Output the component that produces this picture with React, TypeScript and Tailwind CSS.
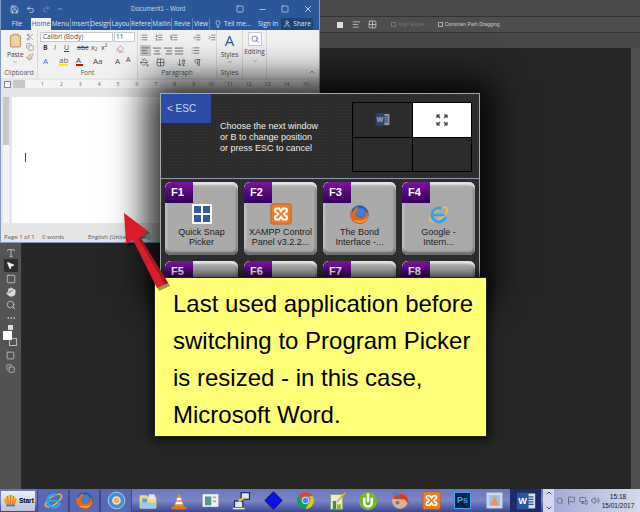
import {
  AlignCenter,
  AlignJustify,
  AlignLeft,
  AlignRight,
  ArrowDownAZ,
  ChevronUp,
  ChevronDown,
  Clipboard,
  Copy,
  Eraser,
  Flag,
  Grid2x2,
  Hand,
  IndentDecrease,
  IndentIncrease,
  Lightbulb,
  List,
  ListOrdered,
  ListTree,
  Minus,
  MonitorSmartphone,
  MoreHorizontal,
  MousePointer2,
  Paintbrush,
  PaintBucket,
  Pilcrow,
  Redo2,
  Save,
  Scissors,
  Search,
  Square,
  Type,
  Undo2,
  User,
  Volume2,
  X,
} from "lucide-react";
import type { ReactNode } from "react";

const rulerMarks = ["1", "2", "3", "4", "5", "6", "7", "8", "9", "10", "11", "12", "13", "14", "15"];

function Firefox({ size = 20 }: { size?: number }) {
  return (
    <svg width={size} height={size} viewBox="0 0 24 24">
      <circle cx="12" cy="12" r="10.5" fill="#2a5aa8" />
      <circle cx="13" cy="10" r="5.5" fill="#3f7fd0" />
      <path d="M12 22.5C5 22.5 1.5 17 1.5 12c0-2 .5-4 1.5-5.5.2 1.5.8 2.4 1.5 3C5 6 8 3 11 3c-1 1.5-1 3 0 4-3 1-4 4-2.5 6.5 2 3 6.5 3 9 .5 1.500-1.500 2-3.500 1.500-6 1.500 1 2.500 2.500 3 4.500-.2 6-5 10.500-10 10.500z" fill="#e8651a" />
      <path d="M5 18c3 3.500 9 4.500 13 1.500 2-1.500 3.500-3.500 4-6-1.500 3-4 5-7.500 5.500-3.500.5-7-.2-9.500-1z" fill="#f7a823" />
    </svg>
  );
}

function IeIcon({ size = 20 }: { size?: number }) {
  return (
    <svg width={size} height={size} viewBox="0 0 24 24">
      <ellipse cx="12" cy="12" rx="12" ry="5" transform="rotate(-35 12 12)" fill="none" stroke="#f5c22e" strokeWidth="1.8" />
      <circle cx="12.500" cy="12.500" r="8" fill="none" stroke="#2fa4e8" strokeWidth="3.400" strokeDasharray="38 12" transform="rotate(18 12.500 12.500)" />
      <rect x="6" y="11.200" width="13" height="2.600" fill="#2fa4e8" />
    </svg>
  );
}

function Xampp({ size = 20 }: { size?: number }) {
  return (
    <svg width={size} height={size} viewBox="0 0 24 24">
      <rect x="1" y="1" width="22" height="22" rx="2" fill="#ef7b24" stroke="#b9601f" />
      <path d="M7 6h3l2 3 2-3h3c2 0 2 4 0 4l-2 2 2 2c2 0 2 4 0 4h-3l-2-3-2 3H7c-2 0-2-4 0-4l2-2-2-2c-2 0-2-4 0-4z" fill="none" stroke="#fff" strokeWidth="2.200" />
    </svg>
  );
}

function SnapGrid() {
  return (
    <div className="grid h-[20px] w-[20px] grid-cols-2 gap-[2px] bg-white p-[2px]">
      <div className="bg-[#2f5aa6]" />
      <div className="bg-[#2f5aa6]" />
      <div className="bg-[#2f5aa6]" />
      <div className="bg-[#2f5aa6]" />
    </div>
  );
}

function WordIcon({ size = 20 }: { size?: number }) {
  return (
    <svg width={size} height={size} viewBox="0 0 24 24">
      <rect x="9" y="3" width="14" height="18" fill="#d9dfe9" />
      <path d="M13 7h8M13 10h8M13 13h8M13 16h8" stroke="#2b579a" strokeWidth="1.500" />
      <rect x="1" y="2" width="14" height="20" fill="#2b579a" />
      <text x="8" y="16" textAnchor="middle" fontSize="11" fontWeight="700" fill="#fff" fontFamily="'Liberation Sans', sans-serif">W</text>
    </svg>
  );
}

function Chrome({ size = 20 }: { size?: number }) {
  return (
    <svg width={size} height={size} viewBox="0 0 24 24">
      <path d="M12 1.500a10.500 10.500 0 0 1 9.100 5.250H12a5.250 5.250 0 0 0-4.900 3.300L3.500 5.600A10.500 10.500 0 0 1 12 1.500z" fill="#db4437" />
      <path d="M21.100 6.750A10.500 10.500 0 0 1 12 22.500l4.500-7.900a5.250 5.250 0 0 0 0-7.850z" fill="#f4c20d" />
      <path d="M12 22.500A10.500 10.500 0 0 1 3.500 5.600l4.600 8a5.250 5.250 0 0 0 8.400 1z" fill="#0f9d58" />
      <circle cx="12" cy="12" r="4.200" fill="#4285f4" stroke="#fff" />
    </svg>
  );
}

function TaskIcon({ children, boxed }: { children: ReactNode; boxed?: boolean }) {
  return (
    <div className={boxed ? "flex h-[23px] w-[31.500px] items-center justify-center rounded-[2px] border-x border-[#3e488c] bg-[#5a68b4]" : "flex h-[23px] w-[31.500px] items-center justify-center"}>
      {children}
    </div>
  );
}

function Taskbar() {
  return (
    <div className="flex h-[23px] w-full shrink-0 items-center bg-gradient-to-b from-[#6a76ba] via-[#7a86c6] to-[#3e4890]">
      <div className="mx-[1px] flex h-[20px] w-[35px] items-center bg-gradient-to-b from-[#eeeef4] to-[#bcc0da] pl-[1px]">
        <svg width="17" height="15" viewBox="0 0 24 24">
          <path d="M12 3C6 3 2 8 2 13c0 3 2 6 5 7h10c3-1 5-4 5-7 0-5-4-10-10-10z" fill="#f2c12e" />
          <path d="M12 3v17M7 5l2 15M17 5l-2 15M3 10l5 10M21 10l-5 10" stroke="#e0662a" strokeWidth="1.500" />
          <path d="M5 20h14" stroke="#2f8bd0" strokeWidth="3" />
        </svg>
        <span className="text-[6.500px] font-bold text-black">Start</span>
      </div>
      <div className="flex items-center pl-[1px]">
        <TaskIcon boxed><IeIcon size={19} /></TaskIcon>
        <TaskIcon boxed><Firefox size={19} /></TaskIcon>
        <TaskIcon boxed>
          <svg width="19" height="19" viewBox="0 0 24 24">
            <circle cx="12" cy="12" r="10.500" fill="#3f8fd8" stroke="#bfe2f8" />
            <circle cx="12" cy="12" r="4.500" fill="#f2b04a" stroke="#f8e2b0" strokeWidth="2" />
          </svg>
        </TaskIcon>
        <TaskIcon>
          <svg width="20" height="20" viewBox="0 0 24 24">
            <path d="M2 5h8l2 2h10v14H2z" fill="#f2d98a" />
            <rect x="5" y="9" width="6" height="5" fill="#5aa4de" />
            <rect x="13" y="4" width="7" height="6" fill="#e9e9e9" />
            <path d="M2 14h20l-2 7H4z" fill="#9cc8ee" />
          </svg>
        </TaskIcon>
        <TaskIcon>
          <svg width="20" height="20" viewBox="0 0 24 24">
            <path d="M12 2l6 17H6z" fill="#f28a1a" />
            <path d="M10 8h4l1 3H9zM8.500 13h7l1 3h-9z" fill="#f4f4f4" />
            <rect x="3" y="19" width="18" height="3" fill="#e87512" />
          </svg>
        </TaskIcon>
        <TaskIcon>
          <svg width="19" height="19" viewBox="0 0 24 24">
            <rect x="2" y="4" width="20" height="16" fill="#f1f1f1" />
            <rect x="5" y="7" width="8" height="11" fill="#4a9a94" />
            <rect x="15" y="7" width="4" height="2" fill="#9aa" />
            <rect x="15" y="12" width="4" height="2" fill="#9aa" />
          </svg>
        </TaskIcon>
        <TaskIcon>
          <svg width="20" height="20" viewBox="0 0 24 24">
            <rect x="11" y="2" width="10" height="8" fill="#dfe6f4" stroke="#1b2a6a" strokeWidth="1.500" />
            <rect x="3" y="12" width="10" height="8" fill="#dfe6f4" stroke="#1b2a6a" strokeWidth="1.500" />
            <path d="M8 12l7-4" stroke="#f2d21e" strokeWidth="2.500" />
            <rect x="1" y="20" width="14" height="2" fill="#e9e9e9" />
          </svg>
        </TaskIcon>
        <TaskIcon>
          <svg width="19" height="19" viewBox="0 0 24 24">
            <path d="M12 1l11 11-11 11L1 12z" fill="#0a14e0" stroke="#050a50" />
          </svg>
        </TaskIcon>
        <TaskIcon><Chrome size={19} /></TaskIcon>
        <TaskIcon>
          <svg width="20" height="20" viewBox="0 0 24 24">
            <path d="M4 4h15v18H4z" fill="#e9edd8" stroke="#7d8a5a" />
            <path d="M7 12h4v10H7z" fill="#3e8f3a" />
            <path d="M12 16h5v6h-5z" fill="#8ebb4a" />
            <path d="M22 2L12 13" stroke="#d8b040" strokeWidth="2" />
          </svg>
        </TaskIcon>
        <TaskIcon>
          <svg width="20" height="20" viewBox="0 0 24 24">
            <circle cx="12" cy="12" r="11" fill="#76b82a" />
            <path d="M7.500 8v6a4.500 4.500 0 0 0 9 0V8" fill="none" stroke="#fff" strokeWidth="3" />
            <path d="M12 3v10" stroke="#fff" strokeWidth="3" />
          </svg>
        </TaskIcon>
        <TaskIcon>
          <svg width="20" height="20" viewBox="0 0 24 24">
            <circle cx="12" cy="12" r="9.500" fill="#e0b088" />
            <path d="M3 9c3-7 13-9 18-1l2 8-6-6H8z" fill="#c9452a" />
            <circle cx="9" cy="14" r="2.200" fill="#3f7fc8" />
            <path d="M5 3l6 3" stroke="#3f7fc8" strokeWidth="2" />
          </svg>
        </TaskIcon>
        <TaskIcon><Xampp size={19} /></TaskIcon>
        <TaskIcon>
          <div className="flex h-[17px] w-[17px] items-center justify-center border border-[#31a8ff] bg-[#001e36] text-[9px] leading-none font-bold text-[#31a8ff]">Ps</div>
        </TaskIcon>
        <TaskIcon>
          <svg width="19" height="19" viewBox="0 0 24 24">
            <rect x="2" y="2" width="20" height="20" fill="#cfd8ea" />
            <rect x="5" y="5" width="14" height="14" fill="#9fc0e6" />
            <path d="M12 6l5 12H7z" fill="#f0905a" />
          </svg>
        </TaskIcon>
        <div className="flex h-[23px] w-[31.500px] items-center justify-center bg-[#1e2a6a]">
          <WordIcon size={20} />
        </div>
      </div>
      <div className="ml-[2px] flex h-[23px] w-[11px] flex-col items-center justify-between bg-[#d4d8ea] text-[#40487a]">
        <ChevronUp size={8} strokeWidth={3} />
        <ChevronDown size={8} strokeWidth={3} />
      </div>
      <div className="flex h-[23px] flex-1 items-center bg-gradient-to-r from-[#a4acd6] to-[#d5d9ec] pl-[2px] text-[#5a5a62]">
        <div className="flex items-center gap-[3px]">
          <Search size={8} />
          <Flag size={9} />
          <MonitorSmartphone size={9} />
          <Volume2 size={9} />
        </div>
        <div className="ml-auto w-[40px] pr-[4px] text-center text-[6.500px] leading-[9px] text-[#111]">
          <div>15:18</div>
          <div>15/01/2017</div>
        </div>
      </div>
    </div>
  );
}

function ToolSlot({ children, active }: { children: ReactNode; active?: boolean }) {
  return (
    <div className={active ? "flex h-[13px] w-[14px] items-center justify-center rounded-[1px] bg-[#2c2c2c] text-white" : "flex h-[13px] w-[14px] items-center justify-center text-[#c9c9c9]"}>
      {children}
    </div>
  );
}

function PsToolbar() {
  return (
    <div className="flex w-[22px] shrink-0 flex-col items-center justify-end border-r border-[#2a2a2a] bg-[#535353] pb-[114px]">
      <ToolSlot><Type size={10} /></ToolSlot>
      <ToolSlot active><MousePointer2 size={9} fill="#fff" /></ToolSlot>
      <ToolSlot><Square size={10} /></ToolSlot>
      <ToolSlot><Hand size={10} fill="#ddd" /></ToolSlot>
      <ToolSlot><Search size={10} /></ToolSlot>
      <ToolSlot><MoreHorizontal size={10} /></ToolSlot>
      <div className="mt-[1px] h-[5px] w-[5px] bg-[#ddd]" />
      <div className="relative mt-[1px] h-[15px] w-[15px]">
        <div className="absolute right-[1px] bottom-0 h-[8px] w-[8px] border border-[#bbb]" />
        <div className="absolute top-0 left-0 h-[9px] w-[9px] bg-white" />
      </div>
      <div className="mt-[3px]"><ToolSlot><Square size={9} /></ToolSlot></div>
      <ToolSlot><Copy size={9} /></ToolSlot>
    </div>
  );
}

function WordTab({ label, w, active }: { label: string; w: string; active?: boolean }) {
  return (
    <div className={`${w} flex h-full items-center justify-center text-[6.500px] whitespace-nowrap ${active ? "bg-[#f1f1f1] text-[#2b579a]" : "border-r border-[#5f82b8] text-[#dfe6f2]"}`}>
      {label}
    </div>
  );
}

function GroupLabel({ children }: { children: ReactNode }) {
  return <div className="absolute inset-x-0 bottom-[1px] text-center text-[6.500px] leading-[9px] text-[#555]">{children}</div>;
}

function WordWindow() {
  return (
    <div className="absolute top-0 left-0 flex h-[243px] w-[320px] flex-col border-x border-b border-[#7e9bc8] bg-[#e6e6e6] font-['Open_Sans',sans-serif]">
      <div className="relative flex h-[18px] shrink-0 items-center bg-[#2b579a] pl-[9px] text-[#d8e2f0]">
        <div className="flex items-center gap-[7px]">
          <Save size={9} />
          <Undo2 size={9} />
          <Redo2 size={8} className="text-[#7f9ac4]" />
          <Minus size={6} />
        </div>
        <div className="ml-[68px] font-['Liberation_Sans',sans-serif] text-[6.500px] text-[#c7d3e8]">Document1 - Word</div>
        <div className="ml-auto flex items-center gap-[14px] pr-[6px]">
          <Square size={8} />
          <Minus size={9} />
          <Square size={8} />
          <X size={10} />
        </div>
      </div>
      <div className="flex h-[12px] shrink-0 items-stretch bg-[#2b579a] pl-[2px] text-[#dfe6f2]">
        <WordTab label="File" w="w-[28px] border-none" />
        <WordTab label="Home" w="w-[20px]" active />
        <WordTab label="Menu" w="w-[20px]" />
        <WordTab label="Insert" w="w-[20px]" />
        <WordTab label="Design" w="w-[20px]" />
        <WordTab label="Layou" w="w-[20px]" />
        <WordTab label="Refere" w="w-[21px]" />
        <WordTab label="Mailin" w="w-[20px]" />
        <WordTab label="Revie" w="w-[21px]" />
        <WordTab label="View" w="w-[17px]" />
        <div className="ml-[4px] flex items-center gap-[2px] text-[6.500px]">
          <Lightbulb size={8} />
          <span>Tell me...</span>
        </div>
        <span className="ml-[7px] self-center text-[6.500px]">Sign in</span>
        <div className="ml-[3px] flex w-[32px] items-center justify-center gap-[2px] bg-[#1e4478] text-[6.500px]">
          <User size={8} />
          <span>Share</span>
        </div>
      </div>
      <div className="flex h-[48px] shrink-0 bg-[#f1f1f1] text-[#444]">
        <div className="relative w-[37px] border-r border-[#d8d8d8] pt-[3px]">
          <div className="flex pl-[6px]">
            <div className="flex flex-col items-center">
              <Clipboard size={15} className="text-[#c9985a]" fill="#e9d3a8" />
              <span className="mt-[3px] text-[6.500px] leading-[8px]">Paste</span>
              <ChevronDown size={6} className="text-[#777]" />
            </div>
            <div className="ml-[2px] flex flex-col gap-[2px] text-[#888]">
              <Scissors size={8} />
              <Copy size={8} />
              <Paintbrush size={8} className="text-[#b8863a]" />
            </div>
          </div>
          <GroupLabel>Clipboard</GroupLabel>
        </div>
        <div className="relative w-[100px] border-r border-[#d8d8d8] pt-[2px] pl-[2px]">
          <div className="flex h-[10px] gap-[1px]">
            <div className="flex w-[73px] items-center border border-[#c8c8c8] bg-white pl-[2px] text-[6.500px]">Calibri (Body)</div>
            <div className="flex w-[21px] items-center border border-[#c8c8c8] bg-white pl-[1px] text-[6.500px]">11</div>
          </div>
          <div className="mt-[1px] flex h-[11px] items-center pl-[3px] text-[7px] text-[#444]">
            <b className="w-[11px]">B</b>
            <i className="w-[10px]">I</i>
            <u className="w-[13px]">U</u>
            <s className="w-[14px]">abc</s>
            <span className="w-[10px]">x₂</span>
            <span className="w-[15px]">x²</span>
            <Eraser size={8} className="text-[#d0657a]" />
          </div>
          <div className="mt-[1px] flex h-[11px] items-center pl-[3px] text-[8px]">
            <span className="w-[16px] text-[#4a72b8]">A</span>
            <span className="mr-[8px] w-[9px] border-b-2 border-[#ffe800] leading-[8px] text-[#666]">ab</span>
            <span className="mr-[10px] w-[7px] border-b-2 border-[#e00000] leading-[8px]">A</span>
            <span className="w-[22px]">Aa</span>
            <span className="w-[11px]">A</span>
            <span className="text-[7px]">A</span>
          </div>
          <GroupLabel>Font</GroupLabel>
        </div>
        <div className="relative w-[79px] border-r border-[#d8d8d8] pt-[2px] pl-[2px] text-[#555]">
          <div className="flex h-[11px] items-center gap-[7px]">
            <List size={9} />
            <ListOrdered size={9} />
            <ListTree size={9} />
            <IndentDecrease size={9} className="ml-[8px]" />
            <IndentIncrease size={9} />
          </div>
          <div className="mt-[2px] flex h-[11px] items-center gap-[1px]">
            <div className="bg-[#c6c6c6] p-[1px]"><AlignLeft size={9} /></div>
            <AlignCenter size={10} />
            <AlignRight size={10} />
            <AlignJustify size={10} />
            <List size={9} className="ml-[6px]" />
          </div>
          <div className="mt-[1px] flex h-[11px] items-center gap-[7px]">
            <PaintBucket size={9} />
            <Grid2x2 size={9} />
            <ArrowDownAZ size={9} className="ml-[5px]" />
            <Pilcrow size={9} />
          </div>
          <GroupLabel>Paragraph</GroupLabel>
        </div>
        <div className="relative flex w-[26px] flex-col items-center border-r border-[#d8d8d8]">
          <span className="h-[20px] text-[15px] leading-[20px] text-[#2b579a]">A</span>
          <span className="text-[6.500px] leading-[9px]">Styles</span>
          <ChevronDown size={6} className="text-[#777]" />
          <GroupLabel>Styles</GroupLabel>
        </div>
        <div className="flex w-[24px] flex-col items-center border-r border-[#d8d8d8] pt-[2px]">
          <div className="flex h-[14px] w-[14px] items-center justify-center border border-[#ccc] bg-white text-[#2b579a]">
            <Search size={8} />
          </div>
          <span className="text-[6.500px] leading-[12px]">Editing</span>
          <ChevronDown size={6} className="text-[#777]" />
        </div>
        <div className="flex flex-1 items-end justify-end pr-[3px] pb-[2px] text-[#666]">
          <ChevronUp size={8} />
        </div>
      </div>
      <div className="flex h-[12px] shrink-0 items-center bg-[#e6e6e6] pl-[3px] text-[5px] text-[#666]">
        <div className="h-[7px] w-[7px] border border-[#888] bg-white" />
        <div className="ml-[2px] h-[8px] w-[12px] bg-[#c8c8c8]" />
        <div className="flex h-[8px] bg-[#f4f4f4]">
          {rulerMarks.map((m) => (
            <span key={m} className="w-[18.900px] text-right leading-[8px]">{m}</span>
          ))}
        </div>
      </div>
      <div className="flex min-h-0 flex-1 pt-[7px] pb-[9px]">
        <div className="ml-[2px] flex w-[6px] flex-col">
          <div className="h-[48px] bg-[#c8c8c8]" />
          <div className="flex-1 bg-[#f4f4f4]" />
        </div>
        <div className="ml-[3px] flex flex-1 items-center bg-white pl-[13px]">
          <div className="mb-[5px] h-[9px] w-[1px] bg-[#444]" />
        </div>
      </div>
      <div className="flex h-[10px] shrink-0 items-center bg-[#e6e6e6] pl-[3px] text-[6px] text-[#555]">
        <span className="w-[38px]">Page 1 of 1</span>
        <span className="w-[46px]">0 words</span>
        <span>English (United States)</span>
      </div>
    </div>
  );
}

function Tile({ fKey, icon, lines }: { fKey: string; icon?: ReactNode; lines?: string[] }) {
  return (
    <div className="relative h-[73px] w-[73px] overflow-hidden rounded-[6px] bg-[#aaaaaa] shadow-[inset_0_3px_2px_#e4e4e4,inset_0_-3px_2px_#6c6c6c,inset_2px_0_2px_#c8c8c8,inset_-2px_0_2px_#808080]">
      <div className="flex h-[21px] w-[28px] items-center rounded-tl-[6px] bg-gradient-to-b from-[#7a149c] to-[#32005a] pl-[6px] text-[11px] font-bold text-white">
        {fKey}
      </div>
      <div className="flex h-[22px] items-center justify-center">{icon}</div>
      <div className="mt-[2px] text-center text-[9px] leading-[10px] text-[#1c1c1c]">
        {lines?.map((l) => <div key={l}>{l}</div>)}
      </div>
    </div>
  );
}

function Picker() {
  return (
    <div className="absolute top-[93px] left-[160px] h-[195px] w-[320px] overflow-hidden border border-[#a8a8a8] bg-[#2c2c2c] bg-[radial-gradient(#363636_1px,transparent_1px)] bg-[length:3px_3px]">
      <div className="relative flex h-[85px] border-b border-[#8f99a8]">
        <div className="flex h-[29px] w-[50px] items-center bg-[#2b4ba6] pl-[6px] text-[10px] text-[#cfd6ea]">&lt; ESC</div>
        <div className="mt-[27px] ml-[9px] text-[9px] leading-[11px] text-[#eeeeee]">
          <div>Choose the next window</div>
          <div>or B to change position</div>
          <div>or press ESC to cancel</div>
        </div>
        <div className="absolute top-[8px] left-[191px] grid h-[70px] w-[120px] grid-cols-2 grid-rows-2 gap-[1px] border border-black bg-black">
          <div className="flex items-center justify-center bg-[#2c2c2c]"><div className="opacity-60"><WordIcon size={15} /></div></div>
          <div className="flex items-center justify-center bg-white">
            <svg width="12" height="12" viewBox="0 0 12 12" fill="none" stroke="#333" strokeWidth="1.100">
              <path d="M1 4V1h3M1 1l3 3M8 1h3v3M11 1L8 4M1 8v3h3M1 11l3-3M8 11h3V8M11 11L8 8" />
            </svg>
          </div>
          <div className="bg-[#2c2c2c]" />
          <div className="bg-[#2c2c2c]" />
        </div>
      </div>
      <div className="grid grid-cols-[repeat(4,73px)] gap-x-[6px] gap-y-[6px] pt-[3px] pl-[4px]">
        <Tile fKey="F1" icon={<SnapGrid />} lines={["Quick Snap", "Picker"]} />
        <Tile fKey="F2" icon={<Xampp size={22} />} lines={["XAMPP Control", "Panel v3.2.2..."]} />
        <Tile fKey="F3" icon={<Firefox size={21} />} lines={["The Bond", "Interface -..."]} />
        <Tile fKey="F4" icon={<IeIcon size={21} />} lines={["Google -", "Intern..."]} />
        <Tile fKey="F5" />
        <Tile fKey="F6" />
        <Tile fKey="F7" />
        <Tile fKey="F8" />
      </div>
    </div>
  );
}

export default function App() {
  return (
    <div className="relative flex h-[512px] w-[640px] flex-col overflow-hidden bg-[#262626] font-['Liberation_Sans',sans-serif]">
      <div className="h-[17px] shrink-0 border-b border-[#333] bg-[#4a4a4a]" />
      <div className="flex h-[16px] shrink-0 items-center border-b border-[#333] bg-[#4e4e4e] pl-[337px] text-[#cfcfcf]">
        <div className="h-[6px] w-[6px] bg-[#ddd]" />
        <AlignLeft size={9} className="ml-[9px]" />
        <Grid2x2 size={9} className="ml-[7px]" />
        <div className="ml-[14px] h-[5px] w-[5px] border border-[#777]" />
        <span className="ml-[2px] text-[5px] text-[#777]">Align Edges</span>
        <div className="ml-[13px] h-[5px] w-[5px] border border-[#aaa]" />
        <span className="ml-[2px] text-[5px] text-[#ccc]">Constrain Path Dragging</span>
      </div>
      <div className="h-[15px] shrink-0 bg-[#484848]" />
      <div className="flex min-h-0 flex-1">
        <PsToolbar />
        <div className="flex-1" />
        <div className="w-[9px] bg-[#505050]" />
      </div>
      <Taskbar />

      <WordWindow />

      <div className="absolute top-[93px] left-[160px] h-[195px] w-[320px] shadow-[0_0_34px_14px_rgba(0,0,0,0.85)]" />
      <Picker />

      <div className="absolute top-[277px] left-[154px] h-[160px] w-[333px] border border-[#222] bg-[#ffff78] pt-[7px] pl-[18px] text-[24px] leading-[37px] text-black shadow-[0_0_10px_3px_rgba(0,0,0,0.7)]">
        <div>Last used application before</div>
        <div>switching to Program Picker</div>
        <div>is resized - in this case,</div>
        <div>Microsoft Word.</div>
      </div>

      <svg className="absolute top-[205px] left-[115px]" width="65" height="95" viewBox="0 0 65 95">
        <path d="M9 8l24 18-8 6 28 47-11 5-24-48-7 4z" fill="#000" opacity="0.4" transform="translate(2 2)" />
        <path d="M9 8l24 18-8 6 28 46-11 5-24-48-7 4z" fill="#d91c2c" />
        <path d="M33 26l-8 6 28 46-3 1.500-27-46z" fill="#a8121f" />
      </svg>
    </div>
  );
}
